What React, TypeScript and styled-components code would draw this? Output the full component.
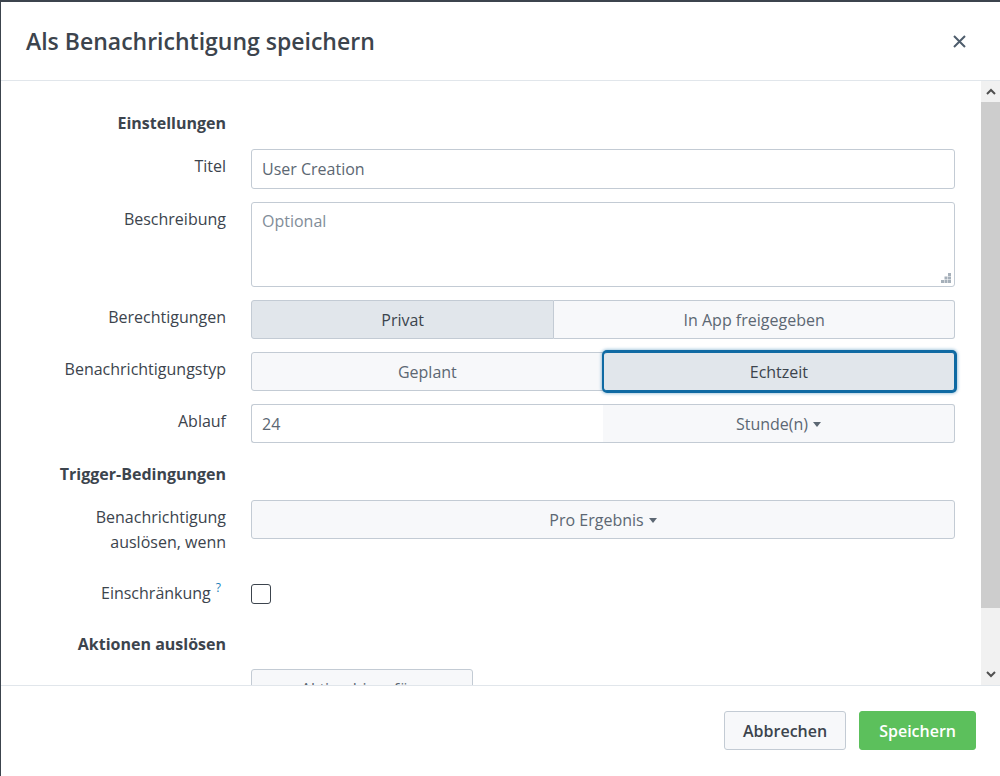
import React from 'react';
import styled, { createGlobalStyle } from 'styled-components';

const GlobalStyle = createGlobalStyle`
  html, body {
    margin: 0;
    padding: 0;
    height: 100%;
    overflow: hidden;
    background-color: #3c444d;
  }
  * {
    box-sizing: border-box;
  }
`;

const Modal = styled.div`
  margin: 2px 0 0 1px;
  height: 774px;
  display: flex;
  flex-direction: column;
  background-color: #ffffff;
  font-family: 'Open Sans', Lato, sans-serif;
  color: #3c444d;
`;

const Header = styled.div`
  height: 79px;
  flex-shrink: 0;
  display: flex;
  align-items: center;
  justify-content: space-between;
  padding: 0 34px 0 25px;
  border-bottom: 1px solid #e1e6eb;
`;

const Title = styled.h2`
  margin: 0;
  font-size: 23px;
  font-weight: 600;
  color: #3c444d;
`;

const CloseButton = styled.button`
  border: none;
  background-color: transparent;
  padding: 0;
  display: flex;
  color: #4e5d6c;
`;

const BodyWrap = styled.div`
  flex: 1;
  display: flex;
  min-height: 0;
`;

const Content = styled.div`
  flex: 1;
  overflow: hidden;
  padding: 24px 26px 0 25px;
`;

const Scrollbar = styled.div`
  width: 19px;
  flex-shrink: 0;
  display: flex;
  flex-direction: column;
  background-color: #f1f1f1;
`;

const ScrollArrow = styled.div`
  height: 21px;
  display: flex;
  align-items: center;
  justify-content: center;
  color: #505050;
`;

const ScrollTrack = styled.div`
  flex: 1;
  display: flex;
  flex-direction: column;
`;

const ScrollThumb = styled.div`
  height: 506px;
  background-color: #cdcdcd;
`;

const Section = styled.div`
  width: 200px;
  height: 36px;
  line-height: 36px;
  margin-bottom: 8px;
  text-align: right;
  font-size: 16px;
  font-weight: 700;
  color: #3c444d;
`;

const Row = styled.div<{ $center?: boolean }>`
  display: grid;
  grid-template-columns: 200px 1fr;
  column-gap: 25px;
  align-items: ${(p) => (p.$center ? 'center' : 'start')};
  margin-bottom: 13px;
`;

const Label = styled.div<{ $multi?: boolean }>`
  text-align: right;
  font-size: 16px;
  line-height: 25px;
  color: #3c444d;
  padding: ${(p) => (p.$multi ? '5px 0 6px' : '5px 0 0')};
`;

const CenteredLabel = styled(Label)`
  padding: 0 5px 0 0;
`;

const Help = styled.sup`
  color: #1a7fb8;
  font-size: 12px;
  margin-left: 5px;
  vertical-align: 7px;
  line-height: 0;
`;

const TextInput = styled.div`
  height: 40px;
  border: 1px solid #c3cbd4;
  border-radius: 3px;
  padding: 0 10px;
  display: flex;
  align-items: center;
  font-size: 16px;
  color: #5c6773;
  background-color: #ffffff;
`;

const TextArea = styled.div`
  position: relative;
  height: 85px;
  border: 1px solid #c3cbd4;
  border-radius: 3px;
  padding: 6px 10px;
  font-size: 16px;
  line-height: 24px;
  color: #818d99;
`;

const ResizeHandle = styled.svg`
  position: absolute;
  right: 3px;
  bottom: 3px;
`;

const Group = styled.div`
  display: flex;
  height: 39px;
`;

const HalfInput = styled(TextInput)`
  flex: 0 0 50%;
  height: 39px;
  border-radius: 3px 0 0 3px;
  border-right: none;
`;

const SegButton = styled.button<{ $active?: boolean; $focus?: boolean }>`
  flex: 1 1 auto;
  position: relative;
  height: 39px;
  margin: 0;
  padding: 0 16px;
  font-family: inherit;
  font-size: 16px;
  color: ${(p) => (p.$active ? '#3c444d' : '#5c6773')};
  background-color: ${(p) => (p.$active ? '#e1e6eb' : '#f7f8fa')};
  border: 1px solid #c3cbd4;
  border-left-width: 0;
  display: flex;
  align-items: center;
  justify-content: center;
  gap: 5px;

  &:first-child {
    border-left-width: 1px;
    border-radius: 3px 0 0 3px;
  }
  &:last-child {
    border-radius: 0 3px 3px 0;
  }
  &:only-child {
    border-radius: 3px;
  }

  ${(p) =>
    p.$focus &&
    `
    z-index: 1;
    border-color: #0f6aa3;
    box-shadow: 0 0 0 2px #0f6aa3, 0 0 3px 3px rgba(15, 106, 163, 0.35);
    border-radius: 3px !important;
  `}
`;

const Caret = styled.span`
  width: 0;
  height: 0;
  border-left: 4px solid transparent;
  border-right: 4px solid transparent;
  border-top: 5px solid #5c6773;
  margin-top: 1px;
`;

const Checkbox = styled.div`
  width: 20px;
  height: 20px;
  border: 1px solid #3c444d;
  border-radius: 3px;
  background-color: #ffffff;
`;

const AddButton = styled.button`
  width: 222px;
  height: 39px;
  margin: -1px 0 0;
  padding: 0;
  font-family: inherit;
  font-size: 16px;
  color: #5c6773;
  background-color: #f7f8fa;
  border: 1px solid #c3cbd4;
  border-radius: 3px;
`;

const Footer = styled.div`
  height: 91px;
  flex-shrink: 0;
  border-top: 1px solid #e1e6eb;
  display: flex;
  justify-content: flex-end;
  align-items: flex-start;
  gap: 13px;
  padding: 25px 24px 0 0;
`;

const FooterButton = styled.button<{ $primary?: boolean }>`
  height: 39px;
  padding: 0 ${(p) => (p.$primary ? '19px' : '18px')};
  font-family: inherit;
  font-size: 16px;
  font-weight: 600;
  border-radius: 3px;
  color: ${(p) => (p.$primary ? '#ffffff' : '#3c444d')};
  background-color: ${(p) => (p.$primary ? '#5cc05c' : '#f7f8fa')};
  border: 1px solid ${(p) => (p.$primary ? '#5cc05c' : '#c3cbd4')};
`;

const Chevron = ({ up }: { up?: boolean }) => (
  <svg width="10" height="7" viewBox="0 0 10 7">
    <path
      d={up ? 'M1 6 L5 2 L9 6' : 'M1 1 L5 5 L9 1'}
      fill="none"
      stroke="currentColor"
      strokeWidth="2"
    />
  </svg>
);

const App = () => {
  return (
    <>
      <GlobalStyle />
      <Modal>
        <Header>
          <Title>Als Benachrichtigung speichern</Title>
          <CloseButton aria-label="Schließen">
            <svg width="13" height="13" viewBox="0 0 13 13">
              <path d="M1 1 L12 12 M12 1 L1 12" stroke="currentColor" strokeWidth="2" />
            </svg>
          </CloseButton>
        </Header>
        <BodyWrap>
          <Content>
            <Section>Einstellungen</Section>
            <Row>
              <Label>Titel</Label>
              <TextInput>User Creation</TextInput>
            </Row>
            <Row>
              <Label>Beschreibung</Label>
              <TextArea>
                Optional
                <ResizeHandle width="10" height="10" viewBox="0 0 10 10">
                  <g fill="#a6b0ba">
                    <rect x="7" y="0" width="3" height="3" />
                    <rect x="3.5" y="3.5" width="3" height="3" />
                    <rect x="7" y="3.5" width="3" height="3" />
                    <rect x="0" y="7" width="3" height="3" />
                    <rect x="3.5" y="7" width="3" height="3" />
                    <rect x="7" y="7" width="3" height="3" />
                  </g>
                </ResizeHandle>
              </TextArea>
            </Row>
            <Row>
              <Label>Berechtigungen</Label>
              <Group>
                <SegButton $active>Privat</SegButton>
                <SegButton>In App freigegeben</SegButton>
              </Group>
            </Row>
            <Row>
              <Label>Benachrichtigungstyp</Label>
              <Group>
                <SegButton>Geplant</SegButton>
                <SegButton $active $focus>
                  Echtzeit
                </SegButton>
              </Group>
            </Row>
            <Row>
              <Label>Ablauf</Label>
              <Group>
                <HalfInput>24</HalfInput>
                <SegButton>
                  Stunde(n) <Caret />
                </SegButton>
              </Group>
            </Row>
            <Section>Trigger-Bedingungen</Section>
            <Row>
              <Label $multi>
                Benachrichtigung
                <br />
                auslösen, wenn
              </Label>
              <Group>
                <SegButton>
                  Pro Ergebnis <Caret />
                </SegButton>
              </Group>
            </Row>
            <Row $center style={{ height: 39 }}>
              <CenteredLabel>
                Einschränkung<Help>?</Help>
              </CenteredLabel>
              <Checkbox />
            </Row>
            <Section>Aktionen auslösen</Section>
            <Row>
              <div />
              <AddButton>+ Aktion hinzufügen</AddButton>
            </Row>
          </Content>
          <Scrollbar>
            <ScrollArrow>
              <Chevron up />
            </ScrollArrow>
            <ScrollTrack>
              <ScrollThumb />
            </ScrollTrack>
            <ScrollArrow>
              <Chevron />
            </ScrollArrow>
          </Scrollbar>
        </BodyWrap>
        <Footer>
          <FooterButton>Abbrechen</FooterButton>
          <FooterButton $primary>Speichern</FooterButton>
        </Footer>
      </Modal>
    </>
  );
};

export default App;
